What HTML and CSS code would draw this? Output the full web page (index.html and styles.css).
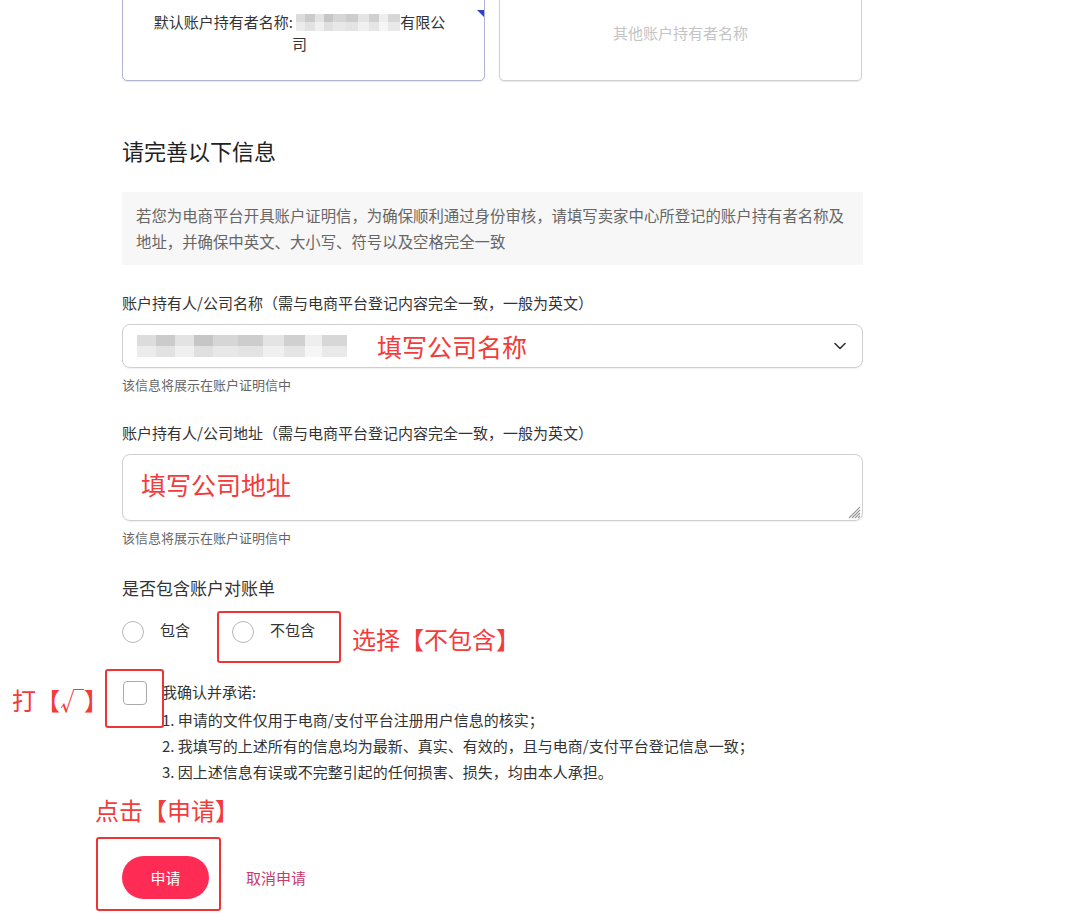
FILE: index.html
```html
<!DOCTYPE html>
<html lang="zh-CN">
<head>
<meta charset="utf-8">
<title>账户证明信</title>
<link rel="stylesheet" href="styles.css">
</head>
<body>
<div class="page">
  <div class="cards">
    <div class="card card-sel">
      <div class="card-text">默认账户持有者名称: <span class="blur blur-sm"></span>有限公<br>司</div>
      <span class="corner"></span>
    </div>
    <div class="card card-other">
      <div class="card-text">其他账户持有者名称</div>
    </div>
  </div>

  <h2 class="title">请完善以下信息</h2>

  <div class="notice">若您为电商平台开具账户证明信，为确保顺利通过身份审核，请填写卖家中心所登记的账户持有者名称及地址，并确保中英文、大小写、符号以及空格完全一致</div>

  <div class="field-label">账户持有人/公司名称（需与电商平台登记内容完全一致，一般为英文）</div>
  <div class="select">
    <span class="blur blur-lg"></span>
    <span class="annot annot-field">填写公司名称</span>
    <svg class="chev" width="12" height="8" viewBox="0 0 12 8"><path d="M1 1.5 L6 6.5 L11 1.5" fill="none" stroke="#333" stroke-width="1.6" stroke-linecap="round" stroke-linejoin="round"/></svg>
  </div>
  <div class="help">该信息将展示在账户证明信中</div>

  <div class="field-label field-label-2">账户持有人/公司地址（需与电商平台登记内容完全一致，一般为英文）</div>
  <div class="textarea">
    <span class="annot annot-field">填写公司地址</span>
    <svg class="resize" width="14" height="14" viewBox="0 0 14 14"><path d="M13 2 L2 13 M13 5 L5 13 M13 8 L8 13 M13 11 L11 13" stroke="#999" stroke-width="1.1" fill="none"/></svg>
  </div>
  <div class="help">该信息将展示在账户证明信中</div>

  <div class="q-label">是否包含账户对账单</div>
  <div class="radio-row">
    <label class="radio-opt">
      <span class="radio"></span>
      <span class="radio-text">包含</span>
    </label>
    <label class="radio-opt radio-opt-2">
      <span class="radio"></span>
      <span class="radio-text">不包含</span>
      <span class="red-box red-box-radio"></span>
    </label>
    <span class="annot annot-radio">选择【不包含】</span>
  </div>

  <div class="confirm-row">
    <span class="annot annot-check">打【√】</span>
    <span class="checkbox-wrap">
      <span class="checkbox"></span>
      <span class="red-box red-box-check"></span>
    </span>
    <div class="terms">
      <div class="terms-head">我确认并承诺:</div>
      <ol class="terms-list">
        <li>1. 申请的文件仅用于电商/支付平台注册用户信息的核实；</li>
        <li>2. 我填写的上述所有的信息均为最新、真实、有效的，且与电商/支付平台登记信息一致；</li>
        <li>3. 因上述信息有误或不完整引起的任何损害、损失，均由本人承担。</li>
      </ol>
    </div>
  </div>

  <div class="annot annot-submit">点击【申请】</div>
  <div class="actions">
    <span class="btn-wrap">
      <button class="btn-primary" type="button">申请</button>
      <span class="red-box red-box-btn"></span>
    </span>
    <a class="btn-link">取消申请</a>
  </div>
</div>
</body>
</html>
```

FILE: styles.css
```css
html, body {
  margin: 0;
  padding: 0;
  background: #fff;
}

body {
  font-family: "Noto Sans CJK SC", "Noto Sans", sans-serif;
  color: #333;
  overflow: hidden;
}

.page {
  width: 741px;
  padding-left: 122px;
  padding-bottom: 25px;
}

/* top cards */
.cards {
  display: grid;
  grid-template-columns: 363px 363px;
  column-gap: 14px;
  margin-top: -15px;
}

.card {
  position: relative;
  height: 96px;
  box-sizing: border-box;
  border: 1px solid #d0d0d0;
  border-radius: 5px;
  display: flex;
  align-items: center;
  justify-content: center;
  text-align: center;
  box-shadow: 0 1px 1px rgba(0, 0, 0, 0.10);
}

.card-sel {
  border-color: #b2b2d4;
}

.card-text {
  font-size: 15px;
  line-height: 22px;
  color: #333;
}

.card-sel .card-text {
  margin-left: -8px;
}

.card-other .card-text {
  color: #c4c4c4;
}

.corner {
  position: absolute;
  right: 0;
  top: 24px;
  width: 0;
  height: 0;
  border-top: 7px solid #2a42c4;
  border-left: 7px solid transparent;
}

/* blurred (mosaic) text */
.blur {
  display: inline-block;
  vertical-align: middle;
  background:
    linear-gradient(to bottom, rgba(255,255,255,0) 50%, rgba(255,255,255,0.45) 50%),
    linear-gradient(90deg, #dcdcdc 0 9%, #cbcbcb 9% 18%, #e3e3e3 18% 27%, #c6c6c6 27% 36%, #d6d6d6 36% 48%, #cdcdcd 48% 60%, #e4e4e4 60% 70%, #d0d0d0 70% 80%, #eeeeee 80% 88%, #d7d7d7 88% 100%);
}

.blur-sm {
  width: 104px;
  height: 17px;
  margin-top: -3px;
}

.blur-lg {
  width: 210px;
  height: 22px;
}

/* headings & notice */
.title {
  margin: 54px 0 0;
  font-size: 22px;
  font-weight: 400;
  line-height: 30px;
  color: #222;
}

.notice {
  margin-top: 27px;
  background: #f7f7f7;
  padding: 10px 14px 11px;
  font-size: 15.4px;
  line-height: 26px;
  color: #666;
}

.field-label {
  margin-top: 27px;
  font-size: 15px;
  line-height: 22px;
  color: #333;
}

.field-label-2 {
  margin-top: 28px;
}

.select {
  margin-top: 10px;
  height: 44px;
  box-sizing: border-box;
  border: 1px solid #cfcfcf;
  border-radius: 8px;
  display: flex;
  align-items: center;
  padding: 0 16px 0 14px;
  box-shadow: 0 1px 1px rgba(0, 0, 0, 0.06);
}

.select .annot-field {
  margin-left: 30px;
}

.chev {
  margin-left: auto;
}

.help {
  margin-top: 8px;
  font-size: 13px;
  line-height: 18px;
  color: #666;
}

.textarea {
  position: relative;
  margin-top: 10px;
  height: 67px;
  box-sizing: border-box;
  border: 1px solid #cfcfcf;
  border-radius: 8px;
  padding: 15px 18px 0;
  box-shadow: 0 1px 1px rgba(0, 0, 0, 0.06);
}

.resize {
  position: absolute;
  right: 1px;
  bottom: 1px;
}

/* annotations */
.annot {
  color: #f23b3b;
  font-size: 24px;
  line-height: 30px;
}

.annot-field {
  font-size: 25px;
  line-height: 28px;
  display: block;
}

.select .annot-field {
  display: inline-block;
}

.red-box {
  position: absolute;
  border: 2px solid #ee3535;
  border-radius: 3px;
  box-sizing: border-box;
  pointer-events: none;
}

/* radio */
.q-label {
  margin-top: 29px;
  font-size: 17px;
  line-height: 24px;
  color: #333;
}

.radio-row {
  margin-top: 21px;
  display: flex;
  align-items: flex-start;
}

.radio-opt {
  position: relative;
  display: flex;
  align-items: center;
  height: 22px;
}

.radio {
  width: 22px;
  height: 22px;
  box-sizing: border-box;
  border: 1.5px solid #b8b8b8;
  border-radius: 50%;
  background: #fff;
}

.radio-text {
  margin-left: 16px;
  font-size: 15px;
  line-height: 20px;
  margin-top: -4px;
  color: #333;
}

.radio-opt-2 {
  margin-left: 42px;
}

.red-box-radio {
  left: -15px;
  top: -10px;
  width: 124px;
  height: 52px;
}

.annot-radio {
  margin-left: 37px;
  margin-top: 3px;
}

/* confirm */
.confirm-row {
  margin-top: 25px;
  margin-left: -110px;
  display: flex;
  align-items: flex-start;
}

.annot-check {
  flex: 0 0 111px;
  box-sizing: border-box;
  margin-top: 6px;
}

.checkbox-wrap {
  position: relative;
  margin-top: 2px;
  width: 24px;
  height: 24px;
}

.checkbox {
  display: block;
  width: 24px;
  height: 24px;
  box-sizing: border-box;
  border: 1.5px solid #aaa;
  border-radius: 4px;
  background: #fff;
}

.red-box-check {
  left: -18px;
  top: -12px;
  width: 59px;
  height: 59px;
}

.terms {
  margin-left: 15px;
  font-size: 15px;
  color: #333;
}

.terms-head {
  line-height: 26px;
}

.terms-list {
  list-style: none;
  margin: 2px 0 0;
  padding: 0;
  line-height: 26px;
}

/* submit */
.annot-submit {
  margin-top: 10px;
  margin-left: -27px;
}

.actions {
  margin-top: 31px;
  display: flex;
  align-items: center;
}

.btn-wrap {
  position: relative;
  display: block;
}

.btn-primary {
  display: block;
  width: 87px;
  height: 43px;
  border: none;
  border-radius: 22px;
  background: #fe2c55;
  color: #fff;
  font-family: "Noto Sans CJK SC", "Noto Sans", sans-serif;
  font-size: 15px;
  padding: 0;
}

.red-box-btn {
  left: -26px;
  top: -19px;
  width: 125px;
  height: 74px;
}

.btn-link {
  margin-left: 37px;
  font-size: 15px;
  color: #c93a6d;
}
```
